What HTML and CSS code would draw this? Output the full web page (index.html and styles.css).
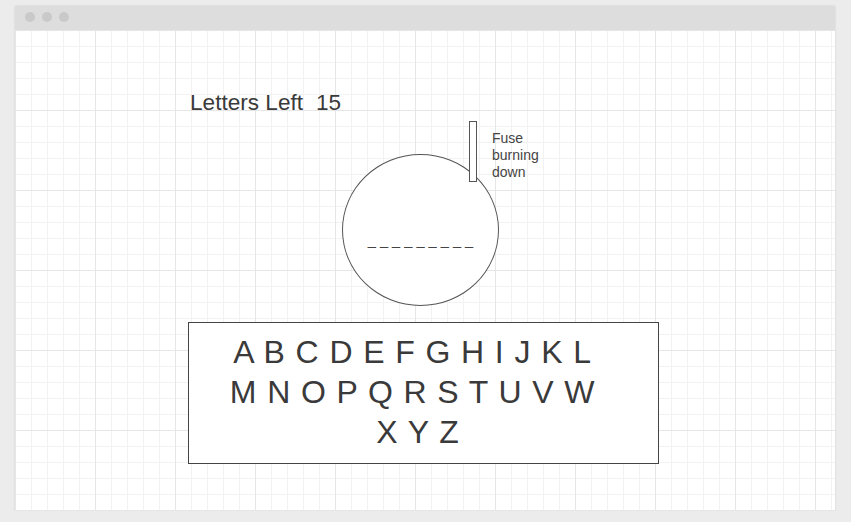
FILE: index.html
```html
<!DOCTYPE html>
<html>
<head>
<meta charset="utf-8">
<link rel="stylesheet" href="styles.css">
</head>
<body>
<div class="window">
  <div class="titlebar">
    <span class="dot"></span><span class="dot"></span><span class="dot"></span>
  </div>
  <div class="canvas">
    <div class="heading"><span>Letters Left</span><span class="count">15</span></div>
    <div class="bomb">
      <div class="circle"><span class="blanks">_ _ _ _ _ _ _ _ _</span></div>
      <div class="fuse"></div>
      <div class="fuse-label">Fuse<br>burning<br>down</div>
    </div>
    <div class="keyboard">
      <div class="row">A B C D E F G H I J K L&nbsp;</div>
      <div class="row">M N O P Q R S T U V W&nbsp;</div>
      <div class="row">X Y Z</div>
    </div>
  </div>
</div>
</body>
</html>
```

FILE: styles.css
```css
html, body {
  margin: 0;
  padding: 0;
  background: #ececec;
  font-family: "Liberation Sans", Arial, sans-serif;
  color: #3a3a3a;
}

.window {
  margin: 6px 16px 0 15px;
  width: 820px;
  height: 505px;
  background: #ffffff;
  box-shadow: 0 0 2px rgba(0, 0, 0, 0.12);
  display: flex;
  flex-direction: column;
}

.titlebar {
  height: 24px;
  background: #dddddd;
  display: flex;
  align-items: center;
  gap: 7px;
  padding: 0 0 2px 10px;
  box-sizing: border-box;
}

.dot {
  width: 10px;
  height: 10px;
  border-radius: 50%;
  background: #c9c9c9;
}

.canvas {
  flex: 1;
  position: relative;
  padding: 60px 0 0 173px;
  box-sizing: border-box;
  background-color: #ffffff;
  background-image:
    linear-gradient(to right, #e6e6e6 1px, transparent 1px),
    linear-gradient(to bottom, #e6e6e6 1px, transparent 1px),
    linear-gradient(to right, #f2f2f2 1px, transparent 1px),
    linear-gradient(to bottom, #f2f2f2 1px, transparent 1px);
  background-size: 80px 80px, 80px 80px, 16px 16px, 16px 16px;
}

.heading {
  display: flex;
  gap: 13px;
  margin-left: 2px;
  font-size: 22.6px;
  line-height: 26px;
  height: 26px;
}

.bomb {
  position: relative;
  margin: 38px 0 0 154px;
  width: 157px;
  height: 152px;
}

.circle {
  width: 157px;
  height: 152px;
  box-sizing: border-box;
  border: 1px solid #555555;
  border-radius: 50%;
  background: #ffffff;
  display: flex;
  justify-content: center;
  padding-top: 77px;
}

.blanks {
  font-size: 14.6px;
  line-height: 17px;
  color: #444444;
  white-space: pre;
}

.fuse {
  position: absolute;
  left: 127px;
  top: -33px;
  width: 8px;
  height: 61px;
  box-sizing: border-box;
  border: 1px solid #555555;
  background: #ffffff;
}

.fuse-label {
  position: absolute;
  left: 150px;
  top: -24px;
  font-size: 14px;
  line-height: 17.2px;
  color: #444444;
}

.keyboard {
  margin-top: 16px;
  width: 471px;
  height: 142px;
  box-sizing: border-box;
  border: 1px solid #444444;
  background: #ffffff;
  padding: 9px 12px 0 0;
  text-align: center;
  font-size: 32px;
  line-height: 40px;
  word-spacing: 1.8px;
  color: #3a3a3a;
}

.row {
  white-space: nowrap;
}
```
